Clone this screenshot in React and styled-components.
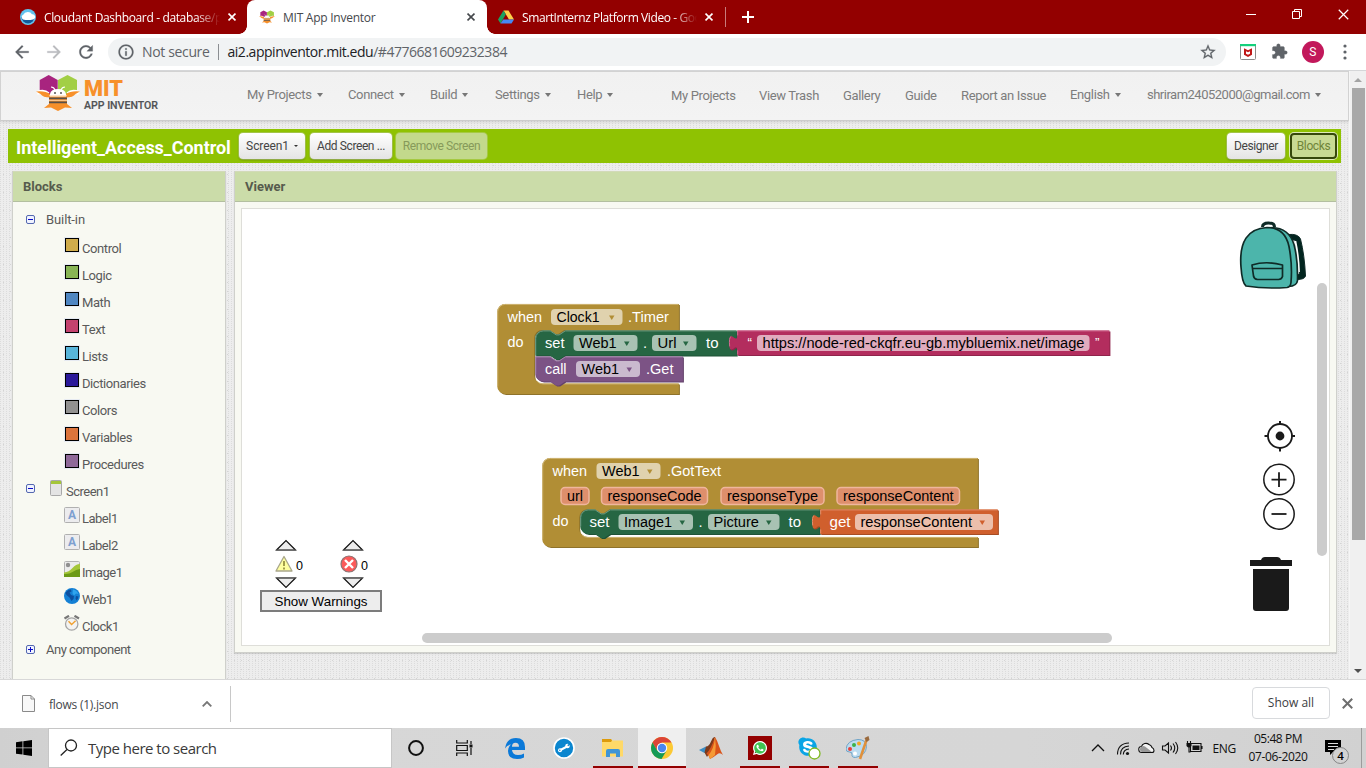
import React from "react";
import styled, { createGlobalStyle, css } from "styled-components";
import { FaSkype, FaWhatsapp } from "react-icons/fa";

const UI = `"Open Sans", "Noto Sans", sans-serif`;
const APP = `Roboto, "Liberation Sans", sans-serif`;
const BLOCK = `"Liberation Sans", Arial, sans-serif`;
const RED = "#930000";

const GlobalStyle = createGlobalStyle`
  * { box-sizing: border-box; }
  body { margin: 0; overflow: hidden; background: #fff; }
  svg { display: block; flex: none; }
`;

const Screen = styled.div`
  width: 1366px;
  height: 768px;
  display: flex;
  flex-direction: column;
  overflow: hidden;
  font-family: ${UI};
`;

const Text = styled.span`
  white-space: nowrap;
  letter-spacing: ${(p) => p.$track || 0}px;
`;

/* ---------- browser chrome ---------- */

const TabStrip = styled.div`
  height: 34px;
  flex: none;
  display: flex;
  background: ${RED};
  color: #fff;
`;

const Tab = styled.div`
  position: relative;
  width: ${(p) => p.$width}px;
  height: 34px;
  padding: 0 ${(p) => p.$right}px 0 ${(p) => p.$left}px;
  display: flex;
  align-items: center;
  gap: 8px;
  font-size: 12px;
  ${(p) =>
    p.$active &&
    css`
      background: #fff;
      color: #45484c;
      border-radius: 8px 8px 0 0;
      &::before,
      &::after {
        content: "";
        position: absolute;
        bottom: 0;
        width: 8px;
        height: 8px;
      }
      &::before {
        left: -8px;
        background: radial-gradient(circle at 0 0, transparent 7.5px, #fff 8px);
      }
      &::after {
        right: -8px;
        background: radial-gradient(circle at 100% 0, transparent 7.5px, #fff 8px);
      }
    `}
`;

const TabTitle = styled(Text)`
  flex: 1;
  min-width: 0;
  overflow: hidden;
  ${(p) =>
    p.$fade &&
    css`
      mask-image: linear-gradient(to right, #000 calc(100% - 24px), transparent);
    `}
`;

const TabDivider = styled.div`
  width: 1px;
  height: 20px;
  margin: 7px 16px 0 7px;
  background: #c87b7b;
`;

const Center = styled.div`
  display: flex;
  align-items: center;
`;

const WindowControls = styled(Center)`
  margin-left: auto;
  height: 28px;
  gap: 36px;
  padding-right: 17px;
`;

const Toolbar = styled.div`
  height: 37px;
  flex: none;
  display: flex;
  align-items: center;
  padding: 0 14px 1px 12px;
  border-bottom: 1px solid #d5d6d8;
  background: #fff;
`;

const ToolIcons = styled(Center)`
  gap: 12px;
  width: 96px;
`;

const Omnibox = styled.div`
  width: 1118px;
  height: 28px;
  border-radius: 14px;
  background: #f1f3f4;
  display: flex;
  align-items: center;
  padding: 0 9px;
  font-size: 14px;
  color: #5f6368;
`;

const Security = styled(Text)`
  margin-left: 7px;
`;

const OmniDivider = styled.div`
  width: 1px;
  height: 16px;
  margin: 0 9px 0 8px;
  background: #8b8e92;
`;

const Url = styled(Text)`
  flex: 1;
  b {
    color: #202124;
    font-weight: 400;
  }
`;

const Avatar = styled.div`
  width: 22px;
  height: 22px;
  border-radius: 50%;
  background: #c2185b;
  color: #fff;
  font: 12px/22px ${APP};
  text-align: center;
`;

/* ---------- app page ---------- */

const Viewport = styled.div`
  height: 608px;
  flex: none;
  display: flex;
  overflow: hidden;
`;

const Page = styled.div`
  width: 1349px;
  display: flex;
  flex-direction: column;
  font-family: ${APP};
  background-color: #ededed;
  background-image: radial-gradient(circle at 0.5px 0.5px, #dcdcdc 0.7px, transparent 0.8px),
    radial-gradient(circle at 3.5px 4.5px, #d4d4d4 0.7px, transparent 0.8px);
  background-size: 3px 2px, 7px 9px;
`;

const Header = styled.div`
  height: 50px;
  flex: none;
  display: flex;
  align-items: flex-start;
  background: linear-gradient(#f1f1f1, #f3f3f3);
  border: 1px solid #d2d2d2;
  border-bottom-color: #cccccc;
  box-shadow: 0 1px 3px rgba(0, 0, 0, 0.12);
  padding-left: 34px;
`;

const Nav = styled.div`
  display: flex;
  margin-left: 82px;
  padding-top: 15px;
`;

const NavItem = styled.div`
  width: ${(p) => p.$width}px;
  padding-top: ${(p) => (p.$drop ? 0 : 1)}px;
  display: flex;
  align-items: center;
  gap: 5px;
  font-size: 13px;
  line-height: 16px;
  height: ${(p) => (p.$drop ? 16 : 17)}px;
  color: #7d7d7d;
`;

const Caret = styled.i`
  border: solid transparent;
  border-width: ${(p) => p.$size || 4}px ${(p) => p.$size || 3}px 0;
  border-top-color: ${(p) => p.$color || "#777"};
`;

const ProjectBar = styled.div`
  height: 34px;
  flex: none;
  margin: 8px 8px 0;
  padding: 0 4px 0 8px;
  display: flex;
  align-items: center;
  background: #8fc202;
`;

const ProjectName = styled(Text)`
  width: 223px;
  padding-top: 3px;
  color: #fff;
  font-size: 18px;
  font-weight: 700;
`;

const Button = styled.div`
  width: ${(p) => p.$width}px;
  height: 26px;
  margin-right: ${(p) => p.$gap ?? 5}px;
  display: flex;
  align-items: center;
  justify-content: center;
  gap: 5px;
  border-radius: 4px;
  font-size: 12px;
  color: #444;
  padding-bottom: 1px;
  background: linear-gradient(#fff, #e4e4e4);
  box-shadow: 0 0 0 1px rgba(190, 205, 160, 0.45), 0 1px 2px rgba(0, 0, 0, 0.35);
  ${(p) =>
    p.$dim &&
    css`
      background: #c3d98c;
      color: #86995a;
      box-shadow: 0 0 0 1px rgba(180, 205, 110, 0.6);
    `}
  ${(p) =>
    p.$focus &&
    css`
      background: #c8da93;
      color: #70853a;
      border: 2px solid #36480b;
      box-shadow: 0 0 0 1px #dfeab8;
    `}
`;

const Spacer = styled.div`
  flex: 1;
`;

const Columns = styled.div`
  flex: 1;
  min-height: 0;
  display: flex;
  align-items: flex-start;
  gap: 8px;
  padding: 8px 12px 0;
`;

const Panel = styled.section`
  width: ${(p) => p.$width}px;
  height: ${(p) => p.$height}px;
  flex: none;
  border: 1px solid #cfd0cb;
  border-width: 0 1px 1px;
  background: #f8f9f2;
  box-shadow: 0 1px 1px rgba(0, 0, 0, 0.12);
`;

const PanelTitle = styled.h2`
  margin: 0;
  height: 31px;
  padding-left: 10px;
  font-size: 13px;
  line-height: 29px;
  font-weight: 700;
  color: #565b4d;
  background: #cbdca9;
  border-bottom: 1px solid #b3bfa0;
  border-top: 1px solid #d2dab8;
`;

const TreeRow = styled.div`
  height: ${(p) => p.$height || 27}px;
  padding-top: ${(p) => p.$top || 0}px;
  padding-left: ${(p) => p.$indent}px;
  display: flex;
  align-items: center;
  color: #5a5a5a;
  font-size: 13px;
`;

const IconSlot = styled.div`
  width: ${(p) => p.$width}px;
  display: flex;
  padding-bottom: ${(p) => p.$lift || 0}px;
`;

const Swatch = styled.div`
  width: 14px;
  height: 14px;
  margin-left: 1px;
  border: 1px solid #000;
  box-shadow: 0 0 0 1px #e6eaf2;
  background: ${(p) => p.$color};
`;

const Toggle = styled.div`
  width: 9px;
  height: 9px;
  border: 1px solid #5468b0;
  border-radius: 2px;
  background: linear-gradient(#0a0ac8, #0a0ac8) center / 5px 1px no-repeat,
    ${(p) => p.$plus && "linear-gradient(#0a0ac8, #0a0ac8) center / 1px 5px no-repeat,"} #f0f3ff;
`;

const Canvas = styled.div`
  margin: 6px 6px 0;
  width: 1089px;
  height: 438px;
  border: 1px solid #deded9;
  background: #fff;
`;

const Scrollbar = styled.div`
  width: 17px;
  display: flex;
  flex-direction: column;
  align-items: center;
  justify-content: space-between;
  padding: 7px 0 6px;
  border-left: 1px solid #f6f6f6;
  background: #f0f0f0;
`;

const Thumb = styled.div`
  width: 13px;
  height: 452px;
  margin: 6px 0 auto;
  flex: none;
  background: #a8a8a8;
`;

/* ---------- download shelf ---------- */

const Shelf = styled.div`
  height: 49px;
  flex: none;
  display: flex;
  align-items: center;
  padding: 0 13px 0 22px;
  border-top: 1px solid #d8d8d8;
  background: #fff;
  font-size: 12px;
  color: #45484c;
`;

const Download = styled.div`
  width: 209px;
  height: 36px;
  display: flex;
  align-items: center;
  justify-content: space-between;
  padding-right: 18px;
  border-right: 1px solid #c8c8c8;
`;

const FileName = styled(Center)`
  gap: 14px;
  svg {
    margin-bottom: 2px;
  }
`;

const ShelfActions = styled(Center)`
  gap: 12px;
  padding-bottom: 2px;
`;

const ShowAll = styled.div`
  width: 78px;
  height: 32px;
  border: 1px solid #d8dadd;
  border-radius: 4px;
  line-height: 30px;
  text-align: center;
  color: #3c4043;
`;

/* ---------- taskbar ---------- */

const Taskbar = styled.div`
  height: 40px;
  flex: none;
  display: flex;
  background: linear-gradient(90deg, #d0d0d0, #d7d7d7 20%, #d6d6d6 75%, #d1d1d1);
  color: #111;
`;

const Start = styled(Center)`
  width: 48px;
  justify-content: center;
`;

const Search = styled(Center)`
  width: 344px;
  padding-left: 11px;
  gap: 10px;
  border: 1px solid #c6c6c6;
  background: #fff;
  font-size: 15px;
  color: #3a3a3a;
`;

const Task = styled.div`
  width: 49px;
  height: 40px;
  display: flex;
  align-items: center;
  justify-content: center;
  padding-right: ${(p) => p.$nudge || 0}px;
  ${(p) =>
    p.$open &&
    css`
      background: linear-gradient(${RED}, ${RED}) center bottom / 40px 2px no-repeat;
    `}
  ${(p) =>
    p.$active &&
    css`
      width: 48px;
      margin-left: 1px;
      background: linear-gradient(${RED}, ${RED}) center bottom / 48px 2px no-repeat, #efefef;
    `}
`;

const WhatsAppTile = styled(Center)`
  width: 24px;
  height: 24px;
  justify-content: center;
  background: ${RED};
`;

const Tray = styled(Center)`
  margin-left: auto;
  font-size: 12px;
`;

const Language = styled(Text)`
  margin-left: 9px;
`;

const Clock = styled.div`
  width: 64px;
  margin: 0 15px 0 10px;
  text-align: center;
  line-height: 18px;
`;

const Notice = styled.div`
  padding-top: 8px;
`;

const DesktopEdge = styled.div`
  width: 5px;
  height: 40px;
  margin-left: 11px;
  border-left: 1px solid #9c9c9c;
`;

const paths = {
  back: "M20 11H7.83l5.59-5.59L12 4l-8 8 8 8 1.41-1.41L7.83 13H20v-2z",
  forward: "M12 4l-1.41 1.41L16.17 11H4v2h12.17l-5.58 5.59L12 20l8-8z",
  reload:
    "M17.65 6.35C16.2 4.9 14.21 4 12 4c-4.42 0-7.99 3.58-7.99 8s3.57 8 7.99 8c3.73 0 6.84-2.55 7.73-6h-2.08c-.82 2.33-3.04 4-5.65 4-3.31 0-6-2.69-6-6s2.69-6 6-6c1.66 0 3.14.69 4.22 1.78L13 11h7V4l-2.35 2.35z",
  info: "M11 7h2v2h-2zm0 4h2v6h-2zm1-9C6.48 2 2 6.48 2 12s4.48 10 10 10 10-4.48 10-10S17.52 2 12 2zm0 18c-4.41 0-8-3.59-8-8s3.59-8 8-8 8 3.59 8 8-3.59 8-8 8z",
  star: "M22 9.24l-7.19-.62L12 2 9.19 8.63 2 9.24l5.46 4.73L5.82 21 12 17.27 18.18 21l-1.63-7.03L22 9.24zM12 15.4l-3.76 2.27 1-4.28-3.32-2.88 4.38-.38L12 6.1l1.71 4.04 4.38.38-3.32 2.88 1 4.28L12 15.4z",
  puzzle:
    "M20.5 11H19V7c0-1.1-.9-2-2-2h-4V3.5C13 2.12 11.88 1 10.5 1S8 2.12 8 3.5V5H4c-1.1 0-1.99.9-1.99 2v3.8H3.5c1.49 0 2.7 1.21 2.7 2.7s-1.21 2.7-2.7 2.7H2V20c0 1.1.9 2 2 2h3.8v-1.5c0-1.49 1.21-2.7 2.7-2.7 1.49 0 2.7 1.21 2.7 2.7V22H17c1.1 0 2-.9 2-2v-4h1.5c1.38 0 2.5-1.12 2.5-2.5S21.88 11 20.5 11z",
};

const Glyph = ({ name, size = 20, color = "#5f6368" }) => (
  <svg width={size} height={size} viewBox="0 0 24 24" fill={color} stroke={color} strokeWidth=".3">
    <path d={paths[name]} />
  </svg>
);

const Cross = ({ size = 8, color = "#fff", weight = 1.6 }) => (
  <svg width={size} height={size} viewBox="0 0 10 10" stroke={color} strokeWidth={(weight * 10) / size}>
    <path d="M.7.7l8.6 8.6M9.3.7L.7 9.3" />
  </svg>
);

const Bee = ({ width, height }) => (
  <svg width={width} height={height} viewBox="0 0 44 36">
    <path d="M12.700 0l9 5v11l-9 5-9-5V5z" fill="#a8247f" />
    <path d="M31.500 0l9.500 5v11l-9.500 5-9.500-5V5z" fill="#a2cf45" />
    <path d="M1 18q7-3 11 1M43 18q-7-3-11 1" stroke="#fff" strokeWidth="4" fill="none" />
    <path d="M0 16.500q9-1 14 2.500v3.500q-7 0-9.500-3.500zM44 16.500q-9-1-14 2.500v3.500q7 0 9.500-3.500z" fill="#f7902a" />
    <path d="M14 22v-3q1-5 8-5t8 5v3z" fill="#fff" />
    <path d="M15 12q3 0 4 3M29 12q-3 0-4 3" stroke="#fff" strokeWidth="1.200" fill="none" />
    <circle cx="19" cy="18" r="1" fill="#555" />
    <circle cx="25" cy="18" r="1" fill="#555" />
    <path d="M13 21.500h18v7.500l5 4-7-.5-7 3.500-7-3.500-7 .5 5-4z" fill="#f7902a" />
    <path d="M13 22.500h18v1.700H13zM13 26.500h18v1.700H13z" fill="#57504b" />
    <path d="M13 20.700h18M13 25.400h18" stroke="#ffd9ae" strokeWidth=".8" />
  </svg>
);

const Logo = () => (
  <svg width="130" height="40" viewBox="35 72 130 40" fontFamily="Roboto, sans-serif">
    <svg x="36" y="75" width="44" height="36" viewBox="0 0 44 36">
      <Bee width="44" height="36" />
    </svg>
    <text x="84" y="96" fontSize="22" fontWeight="900" fill="#f7902a" textLength="39" lengthAdjust="spacingAndGlyphs">
      MIT
    </text>
    <text x="84" y="108.500" fontSize="11.500" fontWeight="500" fill="#505255" stroke="#505255" strokeWidth=".2" textLength="74" lengthAdjust="spacingAndGlyphs">
      APP INVENTOR
    </text>
  </svg>
);

const CloudantIcon = () => (
  <svg width="16" height="16" viewBox="0 0 16 16">
    <circle cx="8" cy="8" r="8" fill="#62c3ee" />
    <path d="M1.500 8h13a6.500 6.500 0 0 1-13 0z" fill="#12599a" />
    <path d="M3 10.500a2.800 2.800 0 0 1 .5-5 4.500 3.500 0 0 1 8.500-.3 2.700 2.700 0 0 1 1 5.300q-5 1.200-10 0z" fill="#fff" />
  </svg>
);

const DriveIcon = () => (
  <svg width="16" height="16" viewBox="0 0 16 16">
    <path d="M5.500 1.500h5L16 10.500h-5z" fill="#ffcf48" />
    <path d="M5.500 1.500L0 10.500l2.500 4 5.400-9.200z" fill="#1aa260" />
    <path d="M5.200 10.500H16l-2.500 4h-11z" fill="#4688f4" />
  </svg>
);

const McAfee = () => (
  <svg width="16" height="16" viewBox="0 0 16 16">
    <rect x=".5" y=".5" width="15" height="15" rx="1" fill="#fff" stroke="#8c8c8c" />
    <path d="M0 0h16v2.200H0z" fill="#14d07c" />
    <path d="M4 4.200l4 2 4-2v6.600L8 13l-4-2.200zM6 7.200v2.600l2 1 2-1V7.200l-2 1z" fill="#c01818" fillRule="evenodd" />
  </svg>
);

/* ---------- component tree icons ---------- */

const ScreenIcon = () => (
  <svg width="12" height="16" viewBox="0 0 12 16">
    <rect x=".5" y=".5" width="11" height="15" rx="1" fill="#e4e4e4" stroke="#a9a9a9" />
    <path d="M1 1h10v3H1z" fill="#a4c639" />
  </svg>
);

const LabelIcon = () => (
  <svg width="16" height="16" viewBox="0 0 16 16">
    <rect x=".5" y=".5" width="15" height="15" rx="1" fill="#ececee" stroke="#b0b0b0" />
    <text x="8" y="12" fontFamily="Roboto, sans-serif" fontWeight="700" fontSize="12" textAnchor="middle" fill="#7da0d0">
      A
    </text>
  </svg>
);

const ImageIcon = () => (
  <svg width="16" height="16" viewBox="0 0 16 16">
    <rect x=".5" y=".5" width="15" height="15" rx="1" fill="#ececec" stroke="#b4b4b4" />
    <circle cx="4" cy="4" r="2.200" fill="#8f8f8f" />
    <path d="M0 11.500q5-.5 8.500-4.500T16 3v12.500H0z" fill="#a4c639" />
    <path d="M0 13q5 .5 8.500-2T16 8v8H0z" fill="#6c9a16" />
  </svg>
);

const WebIcon = () => (
  <svg width="16" height="16" viewBox="0 0 16 16">
    <circle cx="8" cy="8" r="8" fill="#1480d4" />
    <path d="M9 1.500q4 .5 5.500 4.500l-2.500-.5-2 2-1.500-2z" fill="#2fa4ee" />
    <path d="M2 4q2.500-3 5-2.500l.5 2-2 1 1.500 2.500 3 1-.5 3-2 2-2-3.500-2.500-2-1.500-2zM12 8l2.500.5q-.5 3-2 4l-1-2z" fill="#0d4f9f" />
  </svg>
);

const ClockIcon = () => (
  <svg width="16" height="16" viewBox="0 0 16 16">
    <path d="M.5 3.500L5 .8M15 3.500L10.500.8" stroke="#777" strokeWidth="2.200" />
    <circle cx="7.700" cy="9" r="6.200" fill="#f3f3f1" stroke="#a5a5a5" strokeWidth="1.300" />
    <path d="M4.500 6.200L7.600 9.500l4-3.700" stroke="#f0a030" strokeWidth="1.400" fill="none" />
  </svg>
);

const drawers = [
  ["Control", "#d0ac4c"],
  ["Logic", "#88b555"],
  ["Math", "#4f86c2"],
  ["Text", "#c4426f"],
  ["Lists", "#58b5da"],
  ["Dictionaries", "#2a189a"],
  ["Colors", "#929191"],
  ["Variables", "#dc743c"],
  ["Procedures", "#8f6999"],
];

const components = [
  ["Label1", LabelIcon],
  ["Label2", LabelIcon],
  ["Image1", ImageIcon],
  ["Web1", WebIcon],
  ["Clock1", ClockIcon],
];

/* ---------- block workspace ---------- */

const BlockText = styled.text`
  font-family: ${BLOCK};
  font-size: ${(p) => p.$size || 14.67}px;
  fill: ${(p) => p.$fill || "#fff"};
`;

const Word = ({ x, y, w, dark, size, children }) => (
  <BlockText x={x} y={y} textLength={w} lengthAdjust="spacingAndGlyphs" $fill={dark ? "#000" : "#fff"} $size={size}>
    {children}
  </BlockText>
);

const Field = ({ x, y, w, textW, color, pad = 5.5, children, arrow = true }) => (
  <g>
    <rect x={x} y={y} width={w} height="16" rx="4" fill="#fff" fillOpacity=".6" />
    <Word x={x + pad} y={y + 13} w={textW} dark>
      {children}
    </Word>
    {arrow && <path d={`M${x + w - 13.5} ${y + 6.5}h5.500l-2.750 4.500z`} fill={color} />}
  </g>
);

const Param = ({ x, w, children }) => (
  <g>
    <rect x={x} y="487.500" width={w} height="17" rx="4" fill="#de8f6c" stroke="#efb69d" strokeWidth="1.500" />
    <Word x={x + 6} y="501" w={w - 12} dark>
      {children}
    </Word>
  </g>
);

const Shape = ({ d, color, light, dark }) => (
  <g transform="translate(-.8 -.6)">
    <path d={d} fill={dark} transform="translate(1 1)" />
    <path d={d} fill={color} />
    <path d={light.d} fill="none" stroke={light.color} strokeWidth="1" />
  </g>
);

const GOLD = "#b18e35";
const GREEN = "#266643";

const statement = (x, y, right, bottom, first, last) =>
  `M${x} ${first ? `${y + 8}a8 8 0 0 1 8-8` : y}H${x + 15}l6 4h3l6-4H${right}V${y + 5}` +
  `V${bottom}H${x + 30}l-6 4h-3l-6-4H${last ? `${x + 8}a8 8 0 0 1-8-8` : x}z`;

const output = (x, y, right, bottom) =>
  `M${x} ${y}H${right}V${bottom}H${x}V${y + 20}c0-10-8 8-8-7.500s8 2.500 8-7.500z`;

const hat = (x, y, right, innerX, top, innerBottom, bottom) =>
  `M${x} ${y + 8}a8 8 0 0 1 8-8H${right}V${top}H${innerX + 30}l-6 4h-3l-6-4H${innerX + 8}` +
  `a8 8 0 0 0-8 8V${innerBottom - 8}a8 8 0 0 0 8 8H${right}V${bottom}H${x + 8}a8 8 0 0 1-8-8z`;

const Workspace = () => (
  <svg width="1087" height="436" viewBox="242 209 1087 436">
    {/* Clock1.Timer handler */}
    <Shape
      d={hat(498, 304.5, 679.7, 535, 330.5, 384, 394.5)}
      color={GOLD}
      dark="#8e722a"
      light={{ d: "M498.500 387V312.500a7.500 7.500 0 0 1 7.500-7.500H679M538 382q2 2.500 6 2.500H679", color: "#cfb676" }}
    />
    <Shape
      d={statement(536, 331, 737.5, 356, true, false)}
      color={GREEN}
      dark="#1e5236"
      light={{ d: "M536.500 356V339a7.500 7.500 0 0 1 7.500-7.500h7l6 4h3l6-4H737", color: "#6f9c83" }}
    />
    <Shape
      d={statement(536, 357, 683.7, 382, false, true)}
      color="#7c5385"
      dark="#63426a"
      light={{ d: "M536.500 375V357.500h14.500l6 4h3l6-4H683", color: "#a88bae" }}
    />
    <Shape
      d={output(738, 331, 1110.2, 355.5)}
      color="#b32d5e"
      dark="#8f244b"
      light={{ d: "M738.500 336v-4.500H1110M738.500 355v-4M730.500 347q-1-9 1.500-10", color: "#d06c91" }}
    />
    <Word x="507.500" y="322" w="34.500">when</Word>
    <Field x={551} y={309} w={71.5} textW={43} color={GOLD}>Clock1</Field>
    <Word x="628" y="322" w="41">.Timer</Word>
    <Word x="507.500" y="347" w="16">do</Word>
    <Word x="545" y="348" w="19.500">set</Word>
    <Field x={573.5} y={335} w={64} textW={37.5} color={GREEN}>Web1</Field>
    <Word x="643" y="348">.</Word>
    <Field x={652} y={335} w={44.5} textW={19} color={GREEN}>Url</Field>
    <Word x="706" y="348" w="12.500">to</Word>
    <Word x="747.500" y="346.500" w="4.500" size={13}>“</Word>
    <Field x={757} y={335} w={332.5} textW={322} arrow={false}>https://node-red-ckqfr.eu-gb.mybluemix.net/image</Field>
    <Word x="1095" y="346.500" w="4.500" size={13}>”</Word>
    <Word x="545" y="374" w="21.500">call</Word>
    <Field x={576} y={361} w={64} textW={37.5} color="#7c5385">Web1</Field>
    <Word x="646" y="374" w="27.500">.Get</Word>

    {/* Web1.GotText handler */}
    <Shape
      d={hat(543, 458.5, 978.7, 580, 510, 537.5, 547.5)}
      color={GOLD}
      dark="#8e722a"
      light={{ d: "M543.500 540V466.500a7.500 7.500 0 0 1 7.500-7.500H978M583 535.500q2 2.500 6 2.500H978", color: "#cfb676" }}
    />
    <Shape
      d={statement(581, 510, 820.5, 534.5, true, true)}
      color={GREEN}
      dark="#1e5236"
      light={{ d: "M581.500 527V518a7.500 7.500 0 0 1 7.500-7.500h7l6 4h3l6-4H820", color: "#6f9c83" }}
    />
    <Shape
      d={output(821, 510, 998.7, 534.5)}
      color="#d05f2d"
      dark="#a64c24"
      light={{ d: "M821.500 515v-4.500H998M821.500 534v-4M813.500 526q-1-9 1.500-10", color: "#e28f6c" }}
    />
    <Word x="552.500" y="476" w="34.500">when</Word>
    <Field x={596.5} y={463} w={64} textW={37.5} color={GOLD}>Web1</Field>
    <Word x="667" y="476" w="54">.GotText</Word>
    <Param x={561} w={28}>url</Param>
    <Param x={601.5} w={106}>responseCode</Param>
    <Param x={721} w={103}>responseType</Param>
    <Param x={837} w={122.5}>responseContent</Param>
    <Word x="552.500" y="526" w="16">do</Word>
    <Word x="589.500" y="527" w="20">set</Word>
    <Field x={618.5} y={514} w={74.5} textW={48} color={GREEN}>Image1</Field>
    <Word x="698.500" y="527">.</Word>
    <Field x={708} y={514} w={71.5} textW={45.5} color={GREEN}>Picture</Field>
    <Word x="788.500" y="527" w="12.500">to</Word>
    <Word x="829.500" y="527" w="21">get</Word>
    <Field x={855} y={514} w={138} textW={111.5} color="#d05f2d">responseContent</Field>

    {/* backpack */}
    <g stroke="#0f2b27" strokeWidth="1.700" strokeLinejoin="round">
      <path
        d="M1288 234.500q10-1 12.500 4.500 4 16 5 37-1 3.500-8.500 3.500v-4l2.500-2q-1-18-4.500-33.500h-4z"
        fill="#02251f"
        strokeWidth="1"
      />
      <path d="M1294.500 241l1.800 0q3.200 15 3.600 31l-2.600 0q0-16-2.800-31z" fill="#fff" stroke="none" />
      <path d="M1262.500 227q0-4 6-4t6 4" fill="none" strokeWidth="3" />
      <path d="M1272 227.500q17 .5 22 17 4 15 3.500 36-.5 5.500-9 6z" fill="#4cb5ab" />
      <path d="M1246 286q-4-3-5-19-3-38 26-39.500 18 0 22 19 3.500 18 2 36-.5 4.500-4 5-22 1.500-41-1.500z" fill="#4cb5ab" />
      <path d="M1252 265q14-4.500 30.500 0v11.500q-1 3-4 3h-21q-3.500-.5-4-3.500zM1252 268.500h31" fill="none" />
    </g>

    {/* workspace zoom controls */}
    <g fill="none" stroke="#1a1a1a" strokeWidth="1.800">
      <circle cx="1280" cy="436" r="12" />
      <path d="M1280 421v3.500M1280 447.500v4M1264.500 436h3.500M1291.500 436h3.500" strokeWidth="2" />
      <circle cx="1280" cy="436" r="3.500" fill="#1a1a1a" />
      <circle cx="1279" cy="479.500" r="15.200" strokeWidth="1.500" />
      <path d="M1271.500 479.700h15M1279 472.300v14.700" />
      <circle cx="1279" cy="514" r="15.200" strokeWidth="1.500" />
      <path d="M1271.500 514h15" />
    </g>
    <path d="M1250 560h11q1-3 4-3h12q3 0 4 3h11v6h-42zM1253 569h36v39q0 3-3 3h-30q-3 0-3-3z" fill="#1a1a1a" />

    {/* scrollbars */}
    <rect x="1317" y="283" width="10" height="273" rx="5" fill="#ccc" />
    <rect x="422" y="633" width="690" height="10" rx="5" fill="#ccc" />

    {/* warning indicator */}
    <g fill="#ededed" stroke="#111" strokeWidth="1.200">
      <path d="M276.500 550l9.500-9.500 9.500 9.500zM343.500 550l9.500-9.500 9.500 9.500zM276.500 578l9.500 9.500 9.500-9.500zM343.500 578l9.500 9.500 9.500-9.500z" />
      <path d="M276 550.300h20M343 550.300h20M276 577.700h20M343 577.700h20" stroke="#6c6c6c" strokeWidth="1.500" />
    </g>
    <path d="M284 556.500l8 14.500h-16z" fill="#ffffa0" stroke="#a9a78a" strokeWidth="1.300" strokeLinejoin="round" />
    <path d="M284 561v5M284 567.500v2" stroke="#a39e4a" strokeWidth="2" />
    <circle cx="349" cy="564" r="8" fill="#fb5a5a" stroke="#8b7474" strokeWidth="1.200" />
    <path d="M345 560l8 8M353 560l-8 8" stroke="#fff" strokeWidth="2.400" />
    <Word x="296" y="570" w="7" dark size={13.33}>0</Word>
    <Word x="361" y="570" w="7" dark size={13.33}>0</Word>
    <rect x="261" y="591" width="120" height="20" fill="#ededed" stroke="#7c7c7c" strokeWidth="2" />
    <Word x="274.500" y="606" w="93" dark size={13.33}>Show Warnings</Word>
  </svg>
);

/* ---------- taskbar icons ---------- */

const EdgeIcon = () => (
  <svg width="20" height="21" viewBox="0 0 20 21">
    <path
      d="M0 10.500Q1.500 0 11 0q9 0 9 9v3H7q.5 5 6 5 3.500 0 6-1.500v4Q16 21 12 21 3 21 3 13q0-4 3-6.500Q2 7 0 10.500zM7 8.700h7q0-4-3.500-4T7 8.700z"
      fill="#0b79d8"
      fillRule="evenodd"
    />
  </svg>
);

const WrenchIcon = () => (
  <svg width="22" height="22" viewBox="0 0 22 22">
    <circle cx="11" cy="11" r="10" fill="#0b86cf" stroke="#fff" strokeWidth="1.600" />
    <path d="M7.500 13l6.500-3.500" stroke="#fff" strokeWidth="2" />
    <circle cx="7" cy="13.200" r="2" fill="#fff" />
    <circle cx="14.500" cy="9" r="2.300" fill="#fff" />
    <circle cx="6.800" cy="13.300" r=".7" fill="#0b86cf" />
    <path d="M14.700 8.700l3-2.200" stroke="#0b86cf" strokeWidth="1.500" />
  </svg>
);

const FolderIcon = () => (
  <svg width="22" height="18" viewBox="0 0 22 18">
    <path d="M0 0h9l1.500 1.500H21V17.500H0z" fill="#ffd968" />
    <path d="M0 0h9l1 1.500L9 3H0z" fill="#dd9b0c" />
    <path d="M4 18v-6q0-2 2-2h10q2 0 2 2v6h-4v-3.500H8V18z" fill="#3f95d6" />
  </svg>
);

const ChromeIcon = () => (
  <svg width="22" height="22" viewBox="0 0 22 22">
    <circle cx="11" cy="11" r="11" fill="#fcc934" />
    <path d="M1.500 5.500A11 11 0 0 1 20.500 5.500H11L6.200 13.800z" fill="#dc4437" />
    <path d="M1.500 5.500A11 11 0 0 0 10.500 22l5-8.300H6.300z" fill="#159a55" />
    <circle cx="11" cy="11" r="5.200" fill="#fff" />
    <circle cx="11" cy="11" r="4.200" fill="#4a86ee" />
  </svg>
);

const MatlabIcon = () => (
  <svg width="24" height="22" viewBox="0 0 24 22">
    <path d="M0 13l7-3.500 3 3-4.500 3.500z" fill="#3b8dc4" />
    <path d="M7 9.500q3 0 5-5T16 0l-3 12-5 8-2.500-4.500z" fill="#7c3a1c" />
    <path d="M16 0q2 3 4 9t4 9q-3-3-6-.5T11 22q-1.500-4-3.500-5.500Q12 12 16 0z" fill="#d9541a" />
    <path d="M16 0q-1 12-6.500 18l1.500 4q3-2 5-4Q17.500 9 16 0z" fill="#f49a35" />
  </svg>
);

const SkypeIcon = () => (
  <svg width="24" height="24" viewBox="0 0 24 24">
    <g color="#0aa5e6">
      <rect x="5" y="5" width="12" height="12" fill="#fff" />
      <FaSkype size="22" />
    </g>
    <circle cx="17.500" cy="17.500" r="5.500" fill="#fff" stroke="#7fba22" strokeWidth="1.300" />
  </svg>
);

const PaintIcon = () => (
  <svg width="24" height="24" viewBox="0 0 24 24">
    <path d="M12 3.500q8 0 8.500 7-.5 9-11 11-4 0-3.500-3 .5-2.500-2.500-2.500-3.500 0-3.500-3Q1 4.500 12 3.500z" fill="#bcdcf0" stroke="#6fa3c7" />
    <circle cx="4" cy="13" r="2" fill="#e8403a" />
    <circle cx="8" cy="9" r="2" fill="#3bb24a" />
    <circle cx="13" cy="7.500" r="2" fill="#f5a623" />
    <circle cx="9" cy="17.500" r="2" fill="#fff" />
    <path d="M20.500 4L14 23" stroke="#e0913c" strokeWidth="2.600" />
    <path d="M18.500 2l4-2 1 4-3 2z" fill="#9a6a3e" />
  </svg>
);

const TaskViewIcon = () => (
  <svg width="17" height="16" viewBox="0 0 17 16" fill="none" stroke="#111" strokeWidth="1.200">
    <path d="M.7 0v3h10.600V0M.7 16v-3h10.600v3M.7 5.500h10.600v5H.7zM15 1v3M15 8v7" />
    <path d="M13.500 4.500h3v3h-3z" fill="#111" stroke="none" />
  </svg>
);

const TrayIcons = () => (
  <svg width="112" height="20" viewBox="1092 738 112 20" fill="none" stroke="#111" strokeWidth="1.300">
    <path d="M1093 751l6-6 6 6" />
    <path d="M1118.500 754.500q0-11 11.500-11.500M1121.500 754.500q0-8 8.500-8.500M1124.300 754.500q.2-5 5.700-5.500" strokeWidth="1.100" />
    <circle cx="1128.500" cy="753.500" r="1.600" fill="#111" stroke="none" />
    <path d="M1143 752.500a3 3 0 0 1-.5-6 4.500 4 0 0 1 7.500-2 4.500 4.500 0 0 1 3 3q2 1 2 3t-2 2z" fill="#f4f4f4" strokeWidth="1.100" />
    <path d="M1143 752a3 3 0 0 1-.5-5.500 4 4 0 0 1 3.500 0l7 5.500z" fill="#999" stroke="none" />
    <path d="M1163.500 746h2.500l3.500-3v10l-3.500-3h-2.500zM1171.500 745.500q2 2.500 0 5M1174 743.500q3.500 4.500 0 9M1176.500 742q4.500 6 0 12" strokeWidth="1.100" />
    <path d="M1191.500 743.500h10.500v8h-10.500zM1203 746v3" strokeWidth="1.100" />
    <path d="M1193.500 745.500h7v4.500h-7zM1187.500 743h5v3q-2.500 3-5 0z" fill="#111" stroke="none" />
    <path d="M1188.500 741v2.500M1191.500 741v2.500M1190 747v5h1.500" strokeWidth="1.100" />
  </svg>
);

const NoticeIcon = () => (
  <svg width="25" height="26" viewBox="0 0 25 26">
    <path d="M0 1h16v12H8l-3 3v-3H0z" fill="#000" />
    <path d="M3 4.500h10M3 7.500h10M3 10.500h6" stroke="#ddd" />
    <circle cx="15.500" cy="16.500" r="8" fill="#d2d2d2" stroke="#868686" />
    <text x="15.500" y="20.500" fontFamily="Open Sans, sans-serif" fontSize="11.500" fontWeight="600" textAnchor="middle" fill="#000">
      4
    </text>
  </svg>
);

const navItems = [
  ["My Projects", 101, true],
  ["Connect", 82, true],
  ["Build", 65, true],
  ["Settings", 82, true],
  ["Help", 94, true],
  ["My Projects", 88],
  ["View Trash", 84],
  ["Gallery", 62],
  ["Guide", 56],
  ["Report an Issue", 109],
  ["English", 77, true],
];

export default function App() {
  return (
    <Screen>
      <GlobalStyle />
      <TabStrip>
        <Tab $width={247} $left={20} $right={11}>
          <CloudantIcon />
          <TabTitle $track={-0.36} $fade>Cloudant Dashboard - database/p</TabTitle>
          <Cross />
        </Tab>
        <Tab $width={240} $left={12} $right={12} $active>
          <Bee width={16} height={16} />
          <TabTitle $track={-0.25}>MIT App Inventor</TabTitle>
          <Cross color="#45484c" />
        </Tab>
        <Tab $width={231} $left={11} $right={5}>
          <DriveIcon />
          <TabTitle $track={-0.4} $fade>SmartInternz Platform Video - Goo</TabTitle>
          <Cross />
        </Tab>
        <TabDivider />
        <Center>
          <svg width="12" height="12" viewBox="0 0 12 12" stroke="#fff" strokeWidth="2">
            <path d="M6 0v12M0 6h12" />
          </svg>
        </Center>
        <WindowControls>
          <svg width="10" height="10" stroke="#fff"><path d="M0 5.500h10" /></svg>
          <svg width="10" height="10" fill="none" stroke="#fff"><path d="M.5 2.500h7v7h-7zM2.500 2.500v-2h7v7h-2" /></svg>
          <Cross size={11} weight={1.2} />
        </WindowControls>
      </TabStrip>

      <Toolbar>
        <ToolIcons>
          <Glyph name="back" />
          <Glyph name="forward" color="#b9bbbe" />
          <Glyph name="reload" />
        </ToolIcons>
        <Omnibox>
          <Glyph name="info" size={18} />
          <Security $track={-0.35}>Not secure</Security>
          <OmniDivider />
          <Url $track={-0.47}><b>ai2.appinventor.mit.edu</b>/#4776681609232384</Url>
          <Glyph name="star" size={18} />
        </Omnibox>
        <Spacer />
        <Center>
          <McAfee />
        </Center>
        <Spacer />
        <Glyph name="puzzle" size={17} />
        <Spacer />
        <Avatar>S</Avatar>
        <Spacer />
        <svg width="14" height="16" viewBox="0 0 14 16" fill="#5f6368">
          <circle cx="7" cy="2" r="1.600" />
          <circle cx="7" cy="8" r="1.600" />
          <circle cx="7" cy="14" r="1.600" />
        </svg>
      </Toolbar>

      <Viewport>
        <Page>
          <Header>
            <Logo />
            <Nav>
              {navItems.map(([label, width, drop], i) => (
                <NavItem key={i} $width={width} $drop={drop}>
                  <Text $track={-0.35}>{label}</Text>
                  {drop && <Caret />}
                </NavItem>
              ))}
              <NavItem $width={180} $drop>
                <Text $track={-0.5}>shriram24052000@gmail.com</Text>
                <Caret />
              </NavItem>
            </Nav>
          </Header>

          <ProjectBar>
            <ProjectName $track={-0.05}>Intelligent_Access_Control</ProjectName>
            <Button $width={66}>
              <Text $track={-0.1}>Screen1</Text>
              <Caret $size={2.5} $color="#333" />
            </Button>
            <Button $width={82} $gap={4}><Text $track={-0.4}>Add Screen ...</Text></Button>
            <Button $width={91} $dim><Text $track={-0.42}>Remove Screen</Text></Button>
            <Spacer />
            <Button $width={58}><Text $track={-0.4}>Designer</Text></Button>
            <Button $width={47} $gap={0} $focus><Text $track={-0.4}>Blocks</Text></Button>
          </ProjectBar>

          <Columns>
            <Panel $width={214} $height={540}>
              <PanelTitle>Blocks</PanelTitle>
              <TreeRow $indent={13} $height={33} $top={1}>
                <IconSlot $width={20}><Toggle /></IconSlot>
                <Text $track={-0.1}>Built-in</Text>
              </TreeRow>
              {drawers.map(([name, color]) => (
                <TreeRow key={name} $indent={51}>
                  <IconSlot $width={18} $lift={7}><Swatch $color={color} /></IconSlot>
                  <Text $track={-0.42}>{name}</Text>
                </TreeRow>
              ))}
              <TreeRow $indent={13}>
                <IconSlot $width={24} $lift={6}><Toggle /></IconSlot>
                <IconSlot $width={16} $lift={7}><ScreenIcon /></IconSlot>
                <Text $track={-0.5}>Screen1</Text>
              </TreeRow>
              {components.map(([name, Icon]) => (
                <TreeRow key={name} $indent={51}>
                  <IconSlot $width={18} $lift={7}><Icon /></IconSlot>
                  <Text $track={-0.5}>{name}</Text>
                </TreeRow>
              ))}
              <TreeRow $indent={13} $height={19}>
                <IconSlot $width={20}><Toggle $plus /></IconSlot>
                <Text $track={-0.48}>Any component</Text>
              </TreeRow>
            </Panel>

            <Panel $width={1103} $height={482}>
              <PanelTitle>Viewer</PanelTitle>
              <Canvas>
                <Workspace />
              </Canvas>
            </Panel>
          </Columns>
        </Page>
        <Scrollbar>
          <svg width="8" height="4"><path d="M0 4l4-4 4 4z" fill="#a3a3a3" /></svg>
          <Thumb />
          <svg width="8" height="4"><path d="M0 0l4 4 4-4z" fill="#505050" /></svg>
        </Scrollbar>
      </Viewport>

      <Shelf>
        <Download>
          <FileName>
            <svg width="13" height="17" viewBox="0 0 13 17" fill="#f8f8f8" stroke="#8a8a8a">
              <path d="M.5.500h8.500l3.500 3.500v12.500H.5zM9 .5V4h3.500" />
            </svg>
            <Text $track={-0.25}>flows (1).json</Text>
          </FileName>
          <svg width="10" height="6" fill="none" stroke="#777" strokeWidth="1.800"><path d="M.7 5.300L5 1l4.300 4.300" /></svg>
        </Download>
        <Spacer />
        <ShelfActions>
          <ShowAll><Text>Show all</Text></ShowAll>
          <Cross size={11} color="#6e6e6e" weight={2} />
        </ShelfActions>
      </Shelf>

      <Taskbar>
        <Start>
          <svg width="16" height="16" viewBox="0 0 16 16">
            <path d="M0 2.200l6.500-.9v6.200H0zM7.300 1.200L16 0v7.500H7.300zM0 8.300h6.500v6.300L0 13.700zM7.300 8.300H16V16l-8.700-1.200z" />
          </svg>
        </Start>
        <Search>
          <svg width="18" height="18" viewBox="0 0 18 18" fill="none" stroke="#222" strokeWidth="1.300">
            <circle cx="11" cy="6.500" r="5.500" />
            <path d="M7 10.500L.7 16.500" />
          </svg>
          <Text $track={-0.5}>Type here to search</Text>
        </Search>
        <Task $nudge={2}>
          <svg width="16" height="16"><circle cx="8" cy="8" r="6.900" fill="none" stroke="#111" strokeWidth="2" /></svg>
        </Task>
        <Task $nudge={2}><TaskViewIcon /></Task>
        <Task><EdgeIcon /></Task>
        <Task><WrenchIcon /></Task>
        <Task $open><FolderIcon /></Task>
        <Task $active><ChromeIcon /></Task>
        <Task><MatlabIcon /></Task>
        <Task $open>
          <WhatsAppTile>
            <svg width="16" height="16" viewBox="0 0 16 16">
              <circle cx="8" cy="8" r="6.500" fill="#3fc351" />
              <svg x="0" y="0" width="16" height="16" color="#fff"><FaWhatsapp size="16" /></svg>
            </svg>
          </WhatsAppTile>
        </Task>
        <Task $open><SkypeIcon /></Task>
        <Task $open><PaintIcon /></Task>
        <Tray>
          <TrayIcons />
          <Language $track={-0.3}>ENG</Language>
          <Clock>
            <Text $track={-0.45}>05:48 PM</Text>
            <br />
            <Text $track={-0.35}>07-06-2020</Text>
          </Clock>
          <Notice>
            <NoticeIcon />
          </Notice>
          <DesktopEdge />
        </Tray>
      </Taskbar>
    </Screen>
  );
}
